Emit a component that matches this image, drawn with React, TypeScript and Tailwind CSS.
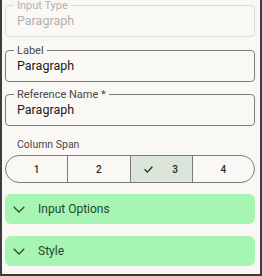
import React from 'react';

const Field: React.FC<{ label: string; value: string; disabled?: boolean; className?: string }> = ({
  label,
  value,
  disabled,
  className = '',
}) => (
  <div
    className={`relative h-[32px] w-[250px] rounded-[4px] border ${
      disabled ? 'border-[#dedbd5]' : 'border-[#7d7a76]'
    } ${className}`}
  >
    <span
      className={`absolute left-[8px] -top-[7px] bg-[#faf8f5] px-[3px] text-[11px] leading-[13px] ${
        disabled ? 'text-[#b3b1ad]' : 'text-[#49474a]'
      }`}
    >
      {label}
    </span>
    <div
      className={`pl-[11px] pt-[7px] text-[12.5px] leading-[16px] ${
        disabled ? 'text-[#b3b1ad]' : 'text-[#1d1c1a]'
      }`}
    >
      {value}
    </div>
  </div>
);

const Chevron = () => (
  <svg width="12" height="7" viewBox="0 0 12 7" fill="none">
    <path d="M0.7 0.7L6 6l5.3-5.3" stroke="#33503a" strokeWidth="1.3" />
  </svg>
);

const Accordion: React.FC<{ title: string; className?: string }> = ({ title, className = '' }) => (
  <div
    className={`flex h-[30px] w-[250px] items-center rounded-[6px] bg-[#a7f5b2] pl-[8px] ${className}`}
  >
    <Chevron />
    <span className="ml-[13px] text-[12px] leading-[14px] text-[#26472d]">{title}</span>
  </div>
);

const App: React.FC = () => {
  const spans = [1, 2, 3, 4];
  const selected = 3;

  return (
    <div
      className="h-[276px] w-[262px] overflow-hidden border-x-2 border-b-2 border-[#3c3c3c] bg-[#faf8f5] pl-[3px]"
      style={{ fontFamily: 'Roboto, "Liberation Sans", sans-serif' }}
    >
      <Field label="Input Type" value="Paragraph" disabled className="mt-[5px]" />
      <Field label="Label" value="Paragraph" className="mt-[13px]" />
      <Field label="Reference Name *" value="Paragraph" className="mt-[12px]" />

      <div className="mt-[12px] pl-[12px] text-[10.5px] leading-[14px] text-[#49474a]">Column Span</div>

      {/* segmented buttons */}
      <div className="mt-[3px] flex h-[28px] w-[250px] overflow-hidden rounded-full border border-[#7d7a76]">
        {spans.map((n, i) => (
          <div
            key={n}
            className={`flex flex-1 items-center justify-center gap-[19px] text-[10px] font-medium text-[#2a2927] ${
              i > 0 ? 'border-l border-[#7d7a76]' : ''
            } ${n === selected ? 'bg-[#dce5da]' : ''}`}
          >
            {n === selected && (
              <svg width="9" height="7" viewBox="0 0 9 7" fill="none">
                <path d="M0.6 3.3l2.7 2.8L8.4 0.7" stroke="#2a2927" strokeWidth="1.3" />
              </svg>
            )}
            <span>{n}</span>
          </div>
        ))}
      </div>

      <Accordion title="Input Options" className="mt-[11px]" />
      <Accordion title="Style" className="mt-[12px]" />
    </div>
  );
};

export default App;
